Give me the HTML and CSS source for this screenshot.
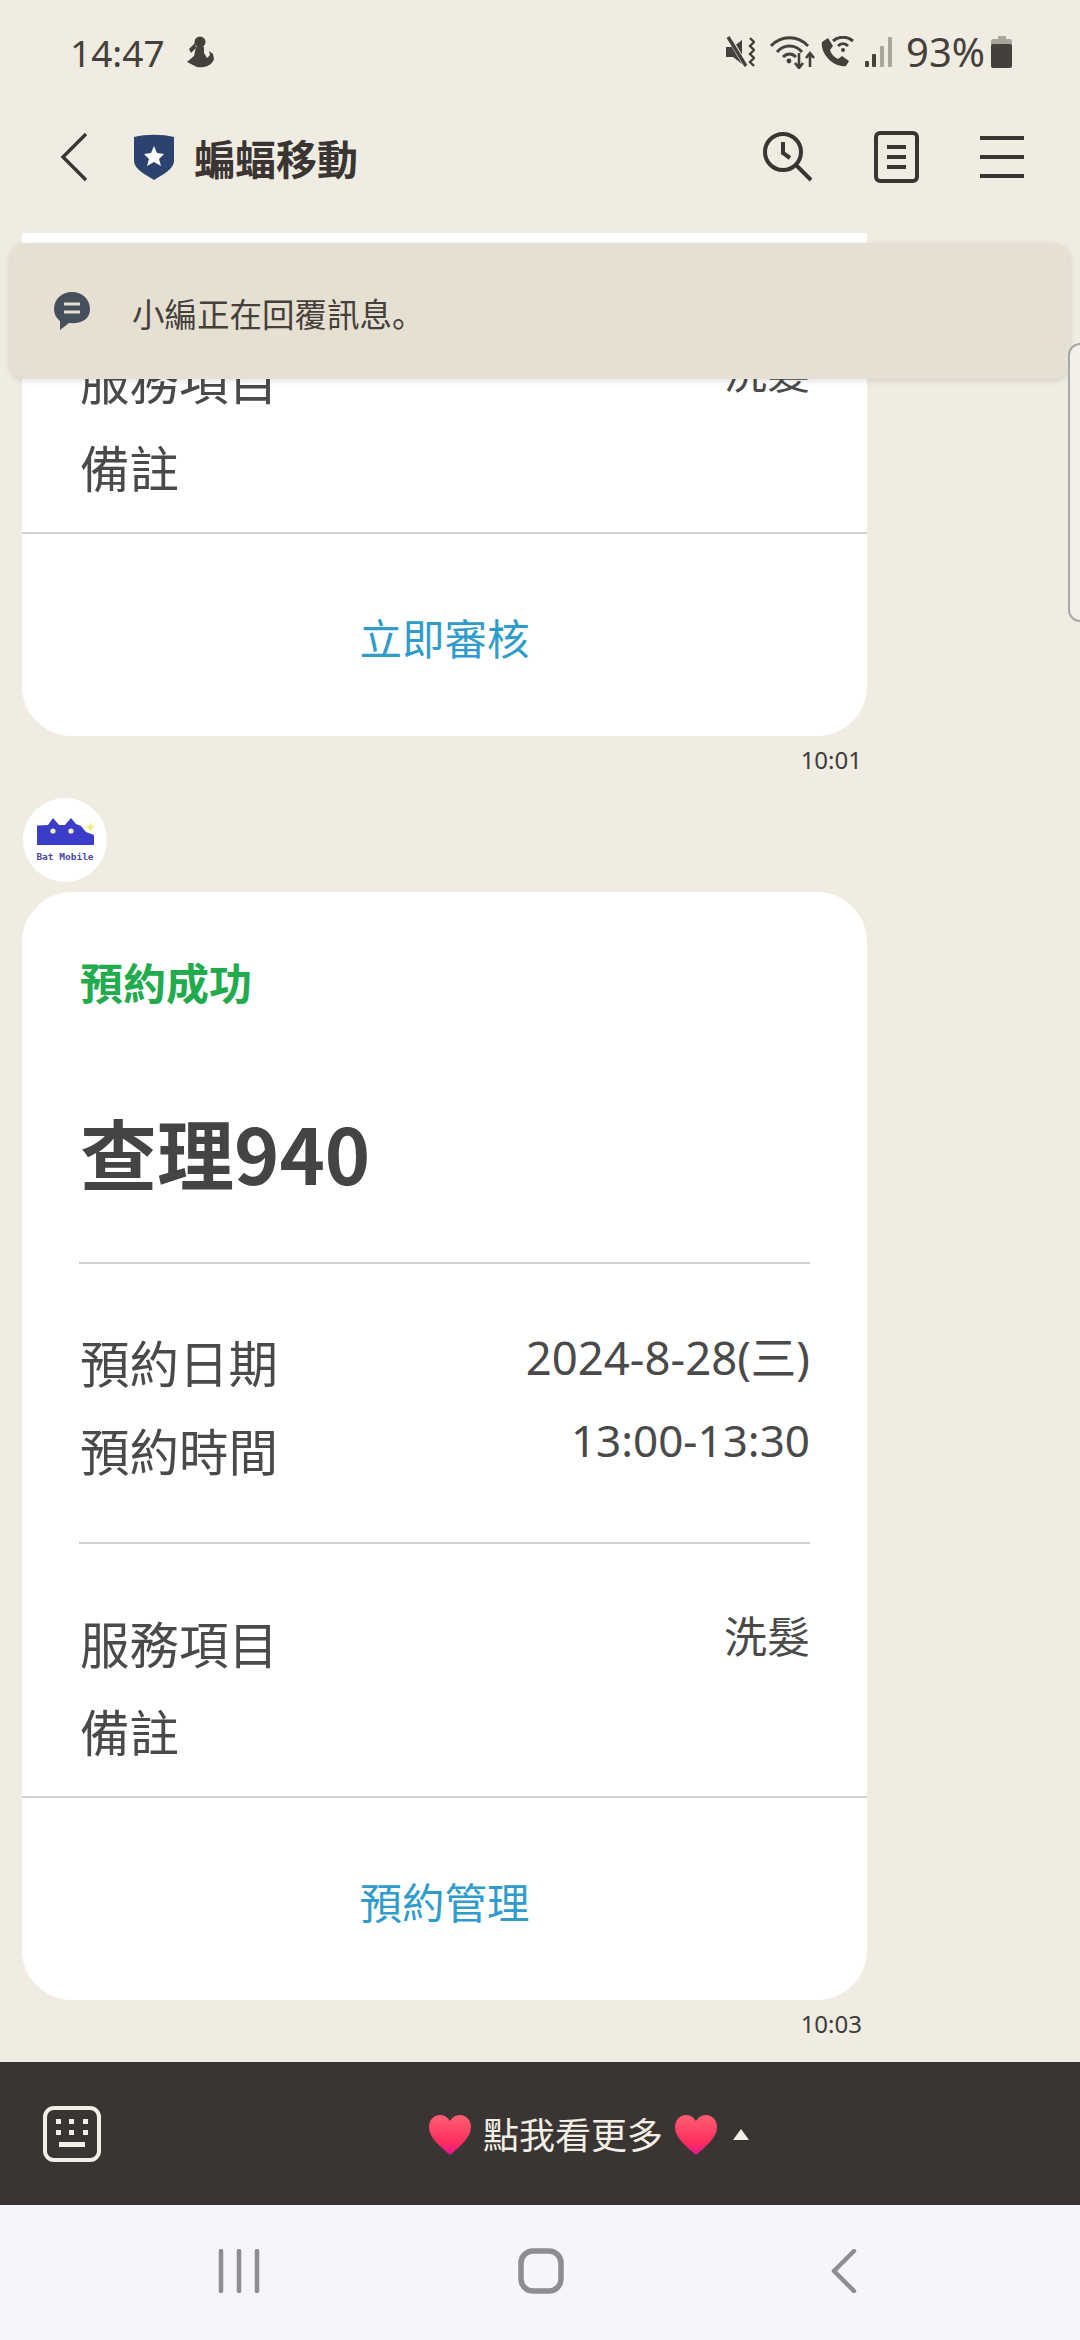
FILE: index.html
```html
<!DOCTYPE html>
<html>
<head>
    <title>蝙蝠移動</title>
    <link rel="stylesheet" href="styles.css">
</head>
<body>
    <div class="screen">
        <div class="status">
            <div class="status-left">
                <span class="clock">14:47</span>
                <svg viewBox="0 0 28 32" width="28" height="32">
                    <circle cx="14" cy="6" r="5.5" fill="#45403c"/>
                    <path d="M10 11 L18 11 L18 17 L21 22 L24 19 L23 15 L27 18 L28 23 C26 30 18 32 11 31 L1 26 L8 20 Z" fill="#45403c"/>
                    <path d="M9 7 L3 13 L5 17 L10 12 Z" fill="#45403c"/>
                </svg>
            </div>
            <div class="status-right">
                <svg class="mute" viewBox="0 0 29 32" width="29" height="32">
                    <path d="M0 11 H7 L16 4 V28 L7 21 H0 Z" fill="#45403c"/>
                    <path d="M2 0 L20 30" stroke="#f0ece2" stroke-width="5"/>
                    <path d="M2 1 L20 30" stroke="#45403c" stroke-width="3.4"/>
                    <path d="M24 2 L28 6 L24 10 L28 14 L24 18 L28 22 L24 26 L28 30" stroke="#45403c" stroke-width="2.4" fill="none"/>
                </svg>
                <svg class="wifi" viewBox="0 0 45 34" width="45" height="34">
                    <path d="M1 11 C11 0 28 0 38 11" stroke="#45403c" stroke-width="3" fill="none"/>
                    <path d="M7 17 C14 9 25 9 32 17" stroke="#45403c" stroke-width="3" fill="none"/>
                    <path d="M13 22 C17 18 22 18 26 22" stroke="#45403c" stroke-width="3" fill="none"/>
                    <circle cx="19" cy="26" r="2.4" fill="#45403c"/>
                    <path d="M29 18 V32 M25 28 L29 33 L33 28 M40 32 V19 M36 23 L40 18 L44 23" stroke="#45403c" stroke-width="2.6" fill="none"/>
                </svg>
                <svg class="call" viewBox="0 0 33 32" width="33" height="32">
                    <path d="M1 6 L7 2 L12 10 L9 14 C10 18 13 21 17 23 L21 20 L28 25 L25 30 C13 32 -1 18 1 6 Z" fill="#45403c"/>
                    <path d="M12 5 C18 0 26 0 32 5" stroke="#45403c" stroke-width="3" fill="none"/>
                    <path d="M17 10 C20 7 24 7 27 10" stroke="#45403c" stroke-width="3" fill="none"/>
                    <circle cx="22" cy="14" r="2" fill="#45403c"/>
                </svg>
                <svg class="signal" viewBox="0 0 27 32" width="27" height="32">
                    <rect x="0" y="25" width="4" height="6" rx="1" fill="#45403c"/>
                    <rect x="7" y="18" width="4" height="13" rx="1" fill="#45403c"/>
                    <rect x="15" y="10" width="4" height="21" rx="1" fill="#a9a59c"/>
                    <rect x="23" y="1" width="4" height="30" rx="1" fill="#a9a59c"/>
                </svg>
                <span class="battery-text">93%</span>
                <svg viewBox="0 0 21 32" width="21" height="32">
                    <rect x="7" y="0" width="8" height="5" fill="#a9a59c"/>
                    <rect x="0" y="3" width="21" height="9" rx="2" fill="#a9a59c"/>
                    <rect x="0" y="8" width="21" height="24" rx="2" fill="#45403c"/>
                </svg>
            </div>
        </div>

        <div class="header">
            <svg class="back" viewBox="0 0 28 50" width="28" height="50">
                <path d="M26 2 L3 25 L26 48" stroke="#3a3533" stroke-width="3.4" fill="none"/>
            </svg>
            <svg class="shield" viewBox="0 0 40 46" width="40" height="46">
                <path d="M0 3 C12 0 28 0 40 3 V27 C40 35 28 41 20 46 C12 41 0 35 0 27 Z" fill="#2c4370"/>
                <path d="M20 12 L23 19 L30 20 L25 25 L27 32 L20 28 L13 32 L15 25 L10 20 L17 19 Z" fill="#fff"/>
            </svg>
            <span class="title">蝙蝠移動</span>
            <div class="header-icons">
                <svg viewBox="0 0 50 50" width="50" height="50">
                    <circle cx="20" cy="20" r="18" stroke="#3a3533" stroke-width="4" fill="none"/>
                    <path d="M20 10 V21 L27 26 M33 33 L48 48" stroke="#3a3533" stroke-width="4" fill="none"/>
                </svg>
                <svg viewBox="0 0 45 52" width="45" height="52">
                    <rect x="2" y="2" width="41" height="48" rx="4" stroke="#3a3533" stroke-width="4" fill="none"/>
                    <path d="M13 16 H32 M13 26 H32 M13 36 H32" stroke="#3a3533" stroke-width="4" fill="none"/>
                </svg>
                <svg viewBox="0 0 44 42" width="44" height="42">
                    <path d="M0 2 H44 M0 21 H44 M0 40 H44" stroke="#3a3533" stroke-width="4" fill="none"/>
                </svg>
            </div>
        </div>

        <div class="chat">
            <div class="card">
                <div class="card-scrolled"></div>
                <div class="section section-last">
                    <div class="labels">
                        <div>服務項目</div>
                        <div>備註</div>
                    </div>
                    <div class="values values-hair">
                        <div>洗髮</div>
                    </div>
                </div>
                <div class="card-action">立即審核</div>
            </div>
            <div class="timestamp">10:01</div>

            <div class="avatar">
                <svg viewBox="0 0 57 27" width="57" height="27">
                    <path d="M0 7.5 L11 7 L16 0 L22 7 L28 7 L34 0 L39 6 L44 8 L49 14 L57 17 V27 H0 Z" fill="#3b3dc8"/>
                    <circle cx="16" cy="13" r="2.6" fill="#f3ecc0"/>
                    <circle cx="34" cy="13" r="2.6" fill="#f3ecc0"/>
                    <path d="M54 4 L55 8 L58 9 L55 10 L53 14 L52 10 L48 9 L52 8 Z" fill="#f4ec6a"/>
                </svg>
                <span class="avatar-name">Bat Mobile</span>
            </div>

            <div class="card card-full">
                <div class="card-top">
                    <div class="card-status">預約成功</div>
                    <div class="card-name">查理940</div>
                </div>
                <div class="section section-line">
                    <div class="labels">
                        <div>預約日期</div>
                        <div>預約時間</div>
                    </div>
                    <div class="values">
                        <div class="value-date">2024-8-28(三)</div>
                        <div>13:00-13:30</div>
                    </div>
                </div>
                <div class="section section-line section-last">
                    <div class="labels">
                        <div>服務項目</div>
                        <div>備註</div>
                    </div>
                    <div class="values values-hair">
                        <div>洗髮</div>
                    </div>
                </div>
                <div class="card-action">預約管理</div>
            </div>
            <div class="timestamp">10:03</div>
        </div>

        <div class="menu-bar">
            <svg viewBox="0 0 58 56" width="58" height="56">
                <rect x="2" y="2" width="54" height="52" rx="9" stroke="#f3efe6" stroke-width="4" fill="none"/>
                <path d="M13 13 h5 v5 h-5 z M26 13 h5 v5 h-5 z M40 13 h5 v5 h-5 z M13 24 h5 v5 h-5 z M26 24 h5 v5 h-5 z M40 24 h5 v5 h-5 z M16 36 h26 v5 h-26 z" fill="#f3efe6"/>
            </svg>
            <div class="menu-label">
                <svg viewBox="0 0 44 42" width="44" height="42">
                    <defs>
                        <linearGradient id="heart-fill" x1="0" y1="0" x2="0" y2="1">
                            <stop offset="0" stop-color="#ff5f72"/>
                            <stop offset="0.7" stop-color="#fb2d5e"/>
                            <stop offset="1" stop-color="#e6149a"/>
                        </linearGradient>
                    </defs>
                    <path d="M22 41 C12 32 1 24 1 13 C1 5 7 1 12 1 C17 1 20 4 22 7 C24 4 27 1 32 1 C37 1 43 5 43 13 C43 24 32 32 22 41 Z" fill="url(#heart-fill)"/>
                </svg>
                <span class="menu-text">點我看更多</span>
                <svg viewBox="0 0 44 42" width="44" height="42">
                    <path d="M22 41 C12 32 1 24 1 13 C1 5 7 1 12 1 C17 1 20 4 22 7 C24 4 27 1 32 1 C37 1 43 5 43 13 C43 24 32 32 22 41 Z" fill="url(#heart-fill)"/>
                </svg>
                <span class="menu-arrow"></span>
            </div>
        </div>

        <div class="nav">
            <svg viewBox="0 0 42 44" width="42" height="44">
                <path d="M3 2 V42 M21 2 V42 M39 2 V42" stroke="#8e8e90" stroke-width="4.5" stroke-linecap="round"/>
            </svg>
            <svg class="nav-home" viewBox="0 0 46 46" width="46" height="46">
                <rect x="3" y="3" width="40" height="40" rx="12" stroke="#8e8e90" stroke-width="5.5" fill="none"/>
            </svg>
            <svg class="nav-back" viewBox="0 0 26 44" width="26" height="44">
                <path d="M23 2 L3 22 L23 42" stroke="#8e8e90" stroke-width="4.5" stroke-linecap="round" stroke-linejoin="round" fill="none"/>
            </svg>
        </div>

        <div class="toast">
            <svg viewBox="0 0 38 40" width="38" height="40">
                <path d="M19 1 C29 1 37 8 37 18 C37 28 29 33 16 32 L7 39 L7 30 C3 27 1 23 1 18 C1 8 9 1 19 1 Z" fill="#45505c"/>
                <path d="M11 13 H27 M11 21 H27" stroke="#e5e0d2" stroke-width="3"/>
            </svg>
            <span class="toast-text">小編正在回覆訊息<span class="toast-stop">。</span></span>
        </div>
        <div class="side-handle"></div>
    </div>
</body>
</html>
```

FILE: styles.css
```css
* { box-sizing: border-box; }
html, body { margin: 0; padding: 0; }
body { font-family: "Noto Sans CJK TC", "Noto Sans", sans-serif; background: #f0ece2; color: #444; }
svg { display: block; flex: none; }

.screen { position: relative; width: 1080px; height: 2340px; display: flex; flex-direction: column; overflow: hidden; }

.status { height: 104px; padding: 0 68px 0 70px; display: flex; justify-content: space-between; align-items: center; flex: none; }
.status-left { display: flex; align-items: center; gap: 21px; }
.clock { font-family: "Noto Sans", sans-serif; font-size: 37px; color: #45403c; line-height: 1; }
.status-right { display: flex; align-items: center; }
.wifi { margin-left: 15px; }
.call { margin-left: 6px; }
.signal { margin-left: 11px; }
.battery-text { font-family: "Noto Sans", sans-serif; font-size: 40px; color: #45403c; margin: 0 6px 0 14px; line-height: 1; }

.header { height: 129px; padding: 0 56px 23px 60px; display: flex; align-items: center; flex: none; }
.back { margin-right: 46px; }
.shield { margin-right: 20px; }
.title { font-size: 41px; font-weight: 700; color: #3a3533; line-height: 1; }
.header-icons { margin-left: auto; display: flex; align-items: center; gap: 61px; }

.chat { flex: 1; min-height: 0; overflow: hidden; display: flex; flex-direction: column; justify-content: flex-end; padding: 0 0 14px 22px; }

.card { width: 845px; background: #fff; border-radius: 0 0 50px 50px; flex: none; }
.card-scrolled { height: 120px; }
.card-full { border-radius: 50px; margin-top: 10px; }
.card-top { padding: 69px 58px 0; }
.card-status { font-size: 43px; line-height: 40px; font-weight: 700; color: #22ab4d; }
.card-name { margin-top: 101px; font-size: 77px; line-height: 100px; font-weight: 700; color: #444; height: 160px; }

.section { display: flex; justify-content: space-between; padding: 0 57px 0 58px; font-size: 49.5px; }
.section-line { position: relative; padding-top: 56px; padding-bottom: 48px; }
.section-line::before { content: ""; position: absolute; top: 0; left: 57px; right: 57px; height: 1.5px; background: #cfcfcf; }
.section-last { padding-bottom: 21px; }
.section-line.section-last { padding-top: 57px; padding-bottom: 21px; }
.labels div { line-height: 88px; color: #4a4a4a; }
.values { margin-top: -2px; text-align: right; font-family: "Noto Sans", "Noto Sans CJK TC", sans-serif; font-size: 44px; line-height: 83px; color: #4a4a4a; }
.value-date { font-size: 45.5px; }
.values-hair { margin-top: -4px; font-size: 43px; }

.card-action { border-top: 2px solid #d2d2d2; height: 204px; padding-top: 3px; display: flex; align-items: center; justify-content: center; font-size: 42.5px; color: #2f9ccb; }

.timestamp { width: 840px; text-align: right; font-family: "Noto Sans", sans-serif; font-size: 24px; line-height: 48px; color: #3c3c3c; flex: none; }

.avatar { width: 84px; height: 84px; margin: 14px 0 0 1px; border-radius: 50%; background: #fff; display: flex; flex-direction: column; align-items: center; justify-content: center; gap: 6px; flex: none; }
.avatar-name { font-family: "DejaVu Sans Mono", monospace; font-size: 9.5px; font-weight: 700; color: #4a46a8; line-height: 11px; white-space: nowrap; }

.menu-bar { height: 143px; background: #3a3533; display: flex; align-items: center; position: relative; padding-left: 43px; flex: none; }
.menu-label { position: absolute; left: 428px; top: 50px; display: flex; align-items: center; gap: 11px; color: #f3efe6; font-size: 36px; line-height: 42px; }
.menu-text { padding-bottom: 3px; }
.menu-arrow { margin-left: 4px; width: 0; height: 0; border-left: 8px solid transparent; border-right: 8px solid transparent; border-bottom: 11px solid #f3efe6; }

.nav { height: 135px; background: #f5f5fa; display: flex; align-items: center; padding: 0 0 4px 218px; flex: none; }
.nav-home { margin-left: 258px; }
.nav-back { margin-left: 267px; }

.toast { position: absolute; left: 10px; top: 243px; width: 1060px; height: 136px; padding-left: 43px; background: #e5e0d2; border-radius: 16px; box-shadow: 0 2px 6px rgba(0, 0, 0, 0.12); display: flex; align-items: center; gap: 41px; font-size: 32.5px; color: #45403c; }
.toast-text { padding-top: 2px; }
.toast-stop { font-family: "Noto Sans CJK SC", sans-serif; }
.side-handle { position: absolute; right: -12px; top: 343px; width: 24px; height: 279px; background: #f3f0e9; border: 2px solid #a8a8a8; border-radius: 14px; }
```
